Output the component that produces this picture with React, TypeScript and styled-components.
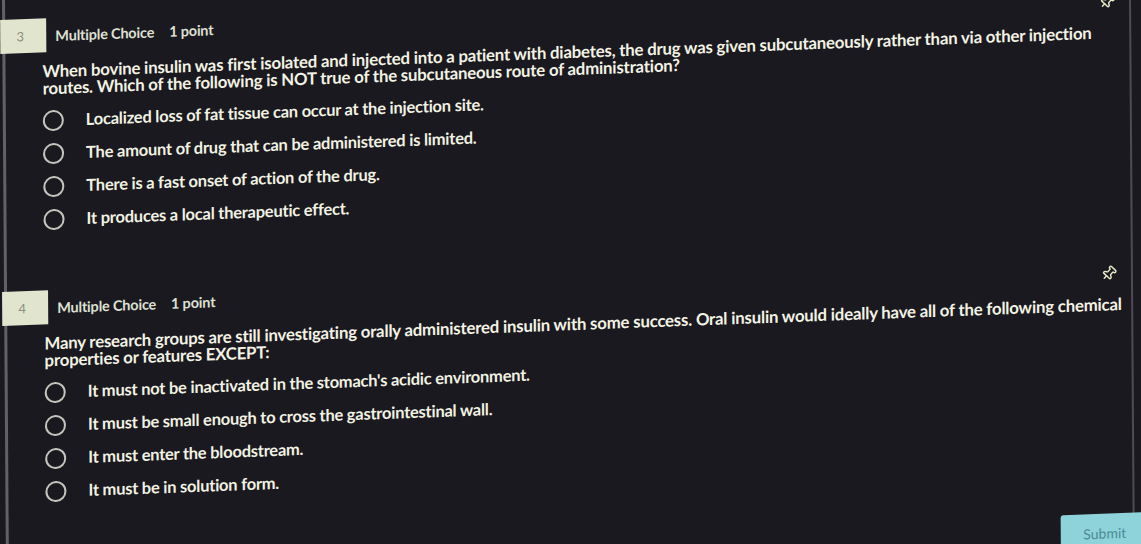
import React from "react"
import styled, { createGlobalStyle } from "styled-components"
import { Pin } from "lucide-react"

const GlobalStyle = createGlobalStyle`
  html, body {
    margin: 0;
    padding: 0;
    background: #1a191f;
    overflow: hidden;
  }
  body {
    font-family: Lato, "Open Sans", sans-serif;
  }
`

// the reference is a photo of a screen, slightly tilted
const Page = styled.div`
  width: 1141px;
  height: 640px;
  padding-left: 2px;
  box-sizing: border-box;
  transform-origin: 0 0;
  transform: rotate(-0.4deg) skewY(-1.7deg);
`

const Panel = styled.div`
  width: 1129px;
  height: 100%;
  box-sizing: border-box;
  border-left: 3px solid #616166;
  border-right: 2px solid #4c4c52;
  padding-top: 20px;
  display: flex;
  flex-direction: column;
`

const Question = styled.section`
  display: flex;
  flex-direction: column;
  & + & {
    margin-top: 59px;
  }
`

const Header = styled.div`
  display: flex;
  align-items: center;
  height: 34px;
  padding-right: 14px;
`

const Badge = styled.div`
  width: 46px;
  height: 34px;
  margin-left: -5px;
  background: #e2e5ce;
  color: #8b8d80;
  font-size: 13px;
  display: flex;
  align-items: center;
  justify-content: center;
  padding-right: 6px;
  box-sizing: border-box;
`

const Meta = styled.span<{ $gap?: number }>`
  margin-left: ${(p) => p.$gap ?? 9}px;
  color: #dfe0d3;
  font-size: 14.5px;
  font-weight: 700;
  letter-spacing: -0.2px;
`

const PinIcon = styled(Pin)`
  margin-left: auto;
  margin-top: 10px;
  color: #e6e8c6;
  transform: rotate(45deg);
`

const Prompt = styled.p`
  margin: 10px 0 0;
  padding-left: 37px;
  padding-right: 0;
  color: #f3f3e4;
  font-size: 16.8px;
  font-weight: 700;
  line-height: 17px;
  letter-spacing: -0.2px;
`

const Options = styled.ul`
  list-style: none;
  margin: 12px 0 0;
  padding: 0 0 0 37px;
  display: flex;
  flex-direction: column;
  gap: 9px;
`

const Option = styled.li`
  display: flex;
  align-items: center;
  height: 24px;
  color: #f1f2e2;
  font-size: 16.5px;
  font-weight: 700;
  letter-spacing: -0.24px;
`

const Radio = styled.span`
  width: 21px;
  height: 21px;
  box-sizing: border-box;
  border: 2px solid #c4c5bd;
  border-radius: 50%;
  margin-right: 22px;
  flex-shrink: 0;
`

const Footer = styled.div`
  display: flex;
  justify-content: flex-end;
  margin-top: 49px;
  margin-right: -16px;
`

const SubmitButton = styled.button`
  width: 88px;
  height: 40px;
  border: none;
  border-radius: 3px;
  background: #8fd3da;
  color: #4a8b96;
  font-family: Lato, sans-serif;
  font-size: 14px;
  padding: 0 0 2px;
`

type Q = { num: number; text: string; options: string[] }

const questions: Q[] = [
  {
    num: 3,
    text: "When bovine insulin was first isolated and injected into a patient with diabetes, the drug was given subcutaneously rather than via other injection routes. Which of the following is NOT true of the subcutaneous route of administration?",
    options: [
      "Localized loss of fat tissue can occur at the injection site.",
      "The amount of drug that can be administered is limited.",
      "There is a fast onset of action of the drug.",
      "It produces a local therapeutic effect.",
    ],
  },
  {
    num: 4,
    text: "Many research groups are still investigating orally administered insulin with some success. Oral insulin would ideally have all of the following chemical properties or features EXCEPT:",
    options: [
      "It must not be inactivated in the stomach's acidic environment.",
      "It must be small enough to cross the gastrointestinal wall.",
      "It must enter the bloodstream.",
      "It must be in solution form.",
    ],
  },
]

export default function App() {
  return (
    <>
      <GlobalStyle />
      <Page>
        <Panel>
          {questions.map((q) => (
            <Question key={q.num}>
              <Header>
                <Badge>{q.num}</Badge>
                <Meta>Multiple Choice</Meta>
                <Meta $gap={15}>1 point</Meta>
                <PinIcon size={16} strokeWidth={2.2} />
              </Header>
              <Prompt>{q.text}</Prompt>
              <Options>
                {q.options.map((o) => (
                  <Option key={o}>
                    <Radio />
                    {o}
                  </Option>
                ))}
              </Options>
            </Question>
          ))}
          <Footer>
            <SubmitButton>Submit</SubmitButton>
          </Footer>
        </Panel>
      </Page>
    </>
  )
}
